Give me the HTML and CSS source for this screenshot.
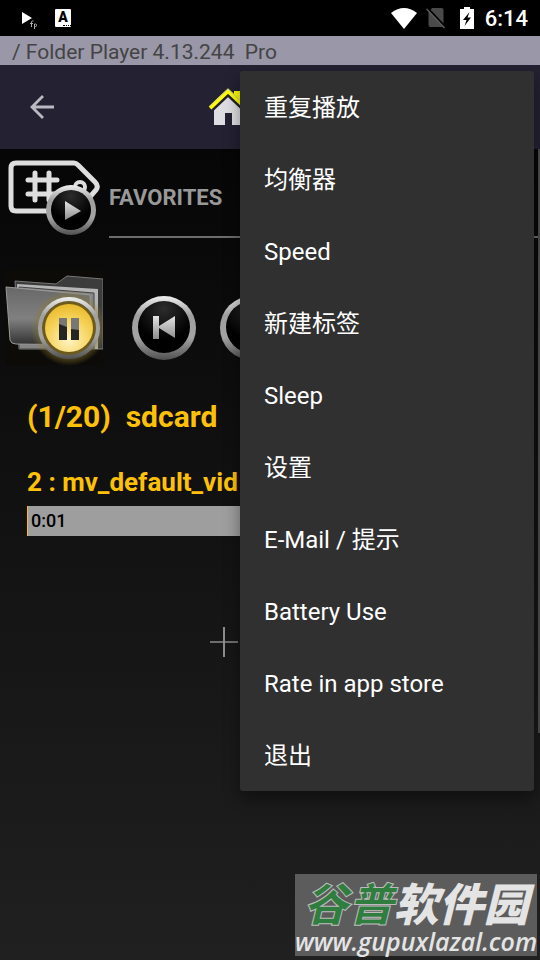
FILE: index.html
```
<!DOCTYPE html>
<html lang="zh-CN">
<head>
  <meta charset="UTF-8">
  <meta name="viewport" content="width=device-width, initial-scale=1.0">
  <title>Folder Player</title>
  <link rel="stylesheet" href="styles.css">
</head>
<body>

  <!-- status bar -->
  <div class="status-bar">
    <svg class="status-play" width="18" height="18" viewBox="0 0 18 18">
      <path d="M2 1v12l10-6z" fill="#fff"/>
      <g fill="none" stroke="#aaa" stroke-width="1">
        <path d="M13.500 10h-1q-1 0-1 1v5M10 12.500h3M14.500 18v-5h1q1 0 1 1v.5q0 1-1 1h-1"/>
      </g>
    </svg>
    <span class="status-lang">A<i></i></span>
    <div class="status-right">
      <svg width="26" height="21" viewBox="0 0 26 21">
        <path d="M0 5Q13-5 26 5L13 21z" fill="#fff"/>
      </svg>
      <svg class="status-sim" width="20" height="22" viewBox="0 0 20 22">
        <path d="M2.500 5.500L6 1h9.500q2 0 2 2v15q0 2-2 2h-11q-2 0-2-2z" fill="#4a4a4a"/>
        <path d="M1.500 1l18 19" stroke="#000" stroke-width="2"/>
        <path d="M.5 2l18 19" stroke="#5c5c5c" stroke-width="1.500"/>
      </svg>
      <svg class="status-battery" width="14" height="22" viewBox="0 0 14 22">
        <path d="M4 0h6v2h4v20H0V2h4z" fill="#fff"/>
        <path d="M9.500 5L3 13h3.500L4.500 19 11 10.500H7.500z" fill="#000"/>
      </svg>
      <span class="clock">6:14</span>
    </div>
  </div>

  <div class="app-title">/ Folder Player 4.13.244&nbsp; Pro</div>

  <header class="toolbar">
    <button class="icon-button back" aria-label="Back">
      <svg width="24" height="24" viewBox="0 0 24 24" fill="none" stroke="#bbbac2" stroke-width="2.800">
        <path d="M24 12H2M13 1L2 12l11 11"/>
      </svg>
    </button>
    <button class="icon-button" aria-label="Home">
      <svg width="40" height="38" viewBox="0 0 40 38">
        <path d="M26 3h8v14l-8-7z" fill="#ff0"/>
        <path d="M6 20L20 7l14 13v17H24V25h-7v12H6z" fill="#dedee2"/>
        <path d="M2 22L20 5l18 17" fill="none" stroke="#232132" stroke-width="6"/>
        <path d="M2 20L20 3l18 17" fill="none" stroke="#ff0" stroke-width="4"/>
        <path d="M1 19L20 1l19 18" fill="none" stroke="#c8c8b0" stroke-width="1"/>
      </svg>
    </button>
  </header>

  <main class="player">
    <svg width="0" height="0" class="defs">
      <defs>
        <linearGradient id="ring" x1="0" y1="0" x2="0" y2="1">
          <stop offset="0" stop-color="#f0f0f0"/>
          <stop offset=".3" stop-color="#a0a0a0"/>
          <stop offset=".65" stop-color="#a4a4a4"/>
          <stop offset="1" stop-color="#505050"/>
        </linearGradient>
        <linearGradient id="glyph" x1="0" y1="0" x2="0" y2="1">
          <stop offset="0" stop-color="#e4e4e4"/>
          <stop offset="1" stop-color="#8c8c8c"/>
        </linearGradient>
        <radialGradient id="knob" cx=".5" cy=".15" r=".6">
          <stop offset="0" stop-color="#2c2c2c"/>
          <stop offset="1" stop-color="#000"/>
        </radialGradient>
        <radialGradient id="gold" cx=".5" cy=".75" r=".75">
          <stop offset="0" stop-color="#fff4c4"/>
          <stop offset=".6" stop-color="#f5d35a"/>
          <stop offset="1" stop-color="#eab92c"/>
        </radialGradient>
        <radialGradient id="glow">
          <stop offset=".7" stop-color="#8f7a30" stop-opacity=".7"/>
          <stop offset="1" stop-color="#8f7a30" stop-opacity="0"/>
        </radialGradient>
        <linearGradient id="folder" x1="0" y1="0" x2="0" y2="1">
          <stop offset="0" stop-color="#686868"/>
          <stop offset=".55" stop-color="#808080"/>
          <stop offset="1" stop-color="#303030"/>
        </linearGradient>
      </defs>
    </svg>

    <div class="favorites">
      <button class="icon-button" aria-label="Play favorites">
        <svg width="92" height="78" viewBox="0 0 92 78">
          <path d="M8 3h58q2 0 4 2l17 17q4 4 1 8L74 46q-3 5-8 5H8q-5 0-5-5V8q0-5 5-5z" fill="none" stroke="#dedede" stroke-width="5"/>
          <circle cx="72" cy="27" r="5" fill="none" stroke="#dedede" stroke-width="4"/>
          <path d="M27 13v27M41 13v27M20 20h29M20 34h29" fill="none" stroke="#dedede" stroke-width="5" stroke-linecap="round"/>
          <circle cx="63" cy="50" r="25" fill="url(#ring)"/>
          <circle cx="63" cy="50" r="20" fill="url(#knob)"/>
          <path d="M57 41v19l16-9z" fill="url(#glyph)"/>
        </svg>
      </button>
      <button class="favorites-label">FAVORITES</button>
    </div>

    <div class="controls">
      <button class="icon-button folder" aria-label="Pause">
        <svg width="98" height="95" viewBox="0 0 98 95">
          <path d="M0 0h98v95H0z" fill="#0c0b08"/>
          <path d="M10 11l41 3 11-8 36 3v70H14z" fill="#3c3c3c" stroke="#777" stroke-width="1"/>
          <path d="M12 14l81 5v60H14z" fill="#b5b5b5"/>
          <path d="M14 17l75 6v56H14z" fill="#858585" stroke="#444"/>
          <path d="M1 17l84 8 2 50-76-1q-5 0-6-4z" fill="url(#folder)" stroke="#999" stroke-width="1"/>
          <circle cx="64" cy="58" r="38" fill="url(#glow)"/>
          <circle cx="64" cy="58" r="31" fill="url(#ring)"/>
          <circle cx="64" cy="58" r="27" fill="#6d5a1e"/>
          <circle cx="64" cy="58" r="24" fill="url(#gold)"/>
          <path d="M54 48h8v22h-8zM66 48h8v22h-8z" fill="#252525"/>
          <path d="M54 48h8v9l-8-3zM66 48h8v12l-8-1z" fill="#777"/>
        </svg>
      </button>
      <button class="icon-button" aria-label="Previous">
        <svg width="66" height="66" viewBox="0 0 66 66">
          <circle cx="33" cy="33" r="32" fill="url(#ring)"/>
          <circle cx="33" cy="32" r="26" fill="url(#knob)"/>
          <path d="M22 21h6v10l16-10v22L28 33v11h-6z" fill="url(#glyph)"/>
        </svg>
      </button>
      <button class="icon-button" aria-label="Next">
        <svg width="66" height="66" viewBox="0 0 66 66">
          <circle cx="33" cy="33" r="32" fill="url(#ring)"/>
          <circle cx="33" cy="32" r="26" fill="url(#knob)"/>
          <path d="M44 21h-6v10L22 21v22l16-10v11h6z" fill="url(#glyph)"/>
        </svg>
      </button>
    </div>

    <div class="now-playing">
      <h1>(1/20)&nbsp; sdcard</h1>
      <h2>2 : mv_default_vid</h2>
      <div class="progress">0:01</div>
    </div>

    <button class="icon-button add" aria-label="Add">
      <svg width="28" height="32" viewBox="0 0 28 32" fill="none" stroke="#8c8c8c">
        <path d="M14 1v30" stroke-width="2"/>
        <path d="M0 16h28" stroke-width="1.500"/>
      </svg>
    </button>

    <div class="scrollbar"></div>
  </main>

  <!-- overflow menu -->
  <nav class="menu">
    <button>重复播放</button>
    <button>均衡器</button>
    <button>Speed</button>
    <button>新建标签</button>
    <button>Sleep</button>
    <button>设置</button>
    <button>E-Mail / 提示</button>
    <button>Battery Use</button>
    <button>Rate in app store</button>
    <button>退出</button>
  </nav>

  <!-- watermark -->
  <div class="watermark">
    <div class="watermark-name"><span>谷普</span>软件园</div>
    <div class="watermark-url">www.gupuxlazal.com</div>
  </div>

</body>
</html>
```
FILE: styles.css
```
* {
  box-sizing: border-box;
}

body {
  position: relative;
  display: flex;
  flex-direction: column;
  min-height: 100vh;
  margin: 0;
  background-color: #000;
  font-family: Roboto, "Noto Sans CJK SC", sans-serif;
  overflow: hidden;
}

h1, h2 {
  margin: 0;
  white-space: nowrap;
}

svg {
  display: block;
}

button {
  padding: 0;
  border: none;
  background: none;
  font-family: inherit;
  cursor: pointer;
}

.icon-button {
  flex: none;
}

/* status bar */
.status-bar {
  display: flex;
  align-items: center;
  height: 36px;
  padding: 0 12px 0 20px;
  color: #fff;
}

.status-play {
  margin-top: 4px;
}

.status-lang {
  display: flex;
  flex-direction: column;
  align-items: center;
  width: 16px;
  height: 18px;
  margin-left: 17px;
  border-radius: 1px;
  background-color: #fff;
  color: #000;
  font-size: 14px;
  font-weight: 900;
  line-height: 16px;
}

.status-lang i {
  width: 8px;
  border-top: 1px dotted #000;
  align-self: flex-end;
}

.status-right {
  display: flex;
  align-items: center;
  margin-left: auto;
}

.status-sim {
  margin-left: 9px;
}

.status-battery {
  margin: 0 11px 0 14px;
}

.clock {
  font-size: 22px;
  font-weight: 500;
  line-height: 36px;
  padding-top: 2px;
}

.app-title {
  height: 29px;
  padding-left: 12px;
  background-color: #9997a8;
  color: #444;
  font-size: 21px;
  line-height: 32px;
  white-space: nowrap;
}

/* toolbar */
.toolbar {
  display: flex;
  align-items: center;
  height: 84px;
  padding-left: 30px;
  background-color: #232132;
}

.toolbar .back {
  margin-right: 154px;
}

/* player */
.player {
  position: relative;
  flex: 1;
  padding-top: 10px;
  background: linear-gradient(#060606, #202020);
}

.defs {
  position: absolute;
}

.favorites {
  display: flex;
  gap: 9px;
  padding: 0 2px 0 8px;
}

.favorites-label {
  flex: 1;
  height: 79px;
  border-bottom: 2px solid #6c6c6c;
  color: #999;
  font-size: 22px;
  font-weight: 700;
  text-align: left;
}

.controls {
  display: flex;
  align-items: center;
  gap: 22px;
  margin-top: 32px;
  padding-left: 5px;
}

.controls .folder {
  margin-right: 6px;
}

.controls .icon-button + .icon-button {
  margin-top: 20px;
}

.now-playing {
  padding: 32px 27px 0;
  color: #ffc107;
}

.now-playing h1 {
  font-size: 30px;
  font-weight: 700;
  line-height: 40px;
}

.now-playing h2 {
  margin-top: 29px;
  font-size: 26px;
  font-weight: 700;
  line-height: 32px;
}

.progress {
  height: 30px;
  margin-top: 8px;
  padding-left: 3px;
  border-left: 1px solid #ffc107;
  background-color: #9e9e9e;
  color: #000;
  font-size: 18px;
  font-weight: 500;
  line-height: 30px;
}

.add {
  margin: 90px 0 0 210px;
}

.scrollbar {
  position: absolute;
  top: 0;
  right: 0;
  width: 2px;
  height: 72%;
  background-color: #4c4c4c;
}

/* overflow menu */
.menu {
  position: absolute;
  top: 71px;
  right: 6px;
  display: flex;
  flex-direction: column;
  width: 294px;
  border-radius: 3px;
  background-color: #303030;
  box-shadow: 0 8px 16px rgba(0, 0, 0, 0.4);
}

.menu button {
  height: 72px;
  padding: 2px 0 0 24px;
  color: #fff;
  font-size: 24px;
  line-height: 36px;
  text-align: left;
}

/* watermark */
.watermark {
  position: absolute;
  right: 3px;
  bottom: 4px;
  width: 242px;
  height: 82px;
  background-color: #5c5c5c;
  color: #e4e4e4;
  font-style: italic;
  text-align: center;
  white-space: nowrap;
}

.watermark-name {
  font-family: "Noto Sans CJK SC", sans-serif;
  font-size: 45px;
  font-weight: 900;
  line-height: 56px;
}

.watermark-name span {
  color: #2f7d3f;
  -webkit-text-stroke: 1px #bbb;
}

.watermark-url {
  font-family: "Open Sans", sans-serif;
  font-size: 25px;
  font-weight: 600;
  line-height: 22px;
}
```
